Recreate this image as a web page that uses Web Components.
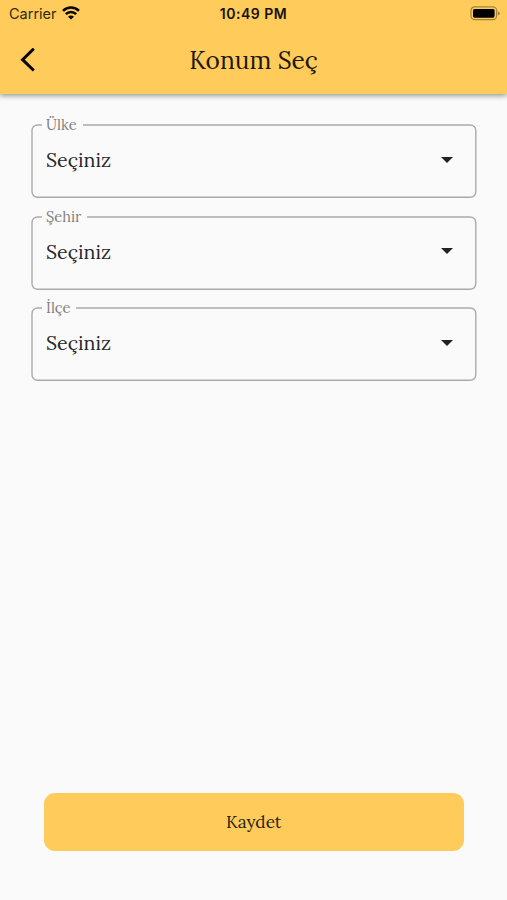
<!DOCTYPE html>
<html lang="tr">
<head>
<meta charset="utf-8">
<title>Konum Seç</title>
<style>
html,body{margin:0;height:100%;background:#fafafa}
body{overflow:hidden;font-family:Lora,"Liberation Serif",serif;color:#292929}
</style>
</head>
<body>
<location-page></location-page>
<script>
function define(name, html) {
  const t = document.createElement('template');
  t.innerHTML = html;
  customElements.define(name, class extends HTMLElement {
    constructor() {
      super();
      this.attachShadow({mode: 'open'}).append(t.content.cloneNode(true));
    }
  });
}

define('status-bar', `
<style>
:host{display:grid;grid-template-columns:1fr auto 1fr;align-items:center;height:27px;padding:0 7px 0 9px;font-family:Inter,sans-serif;color:#16120a;box-sizing:border-box}
.left{display:flex;align-items:center;gap:5px;font-size:14.5px;color:#33290f}
.time{font-weight:600;font-size:14px;letter-spacing:.5px;margin-left:-2px}
svg{display:block}
.left svg{margin-top:-1px}
.battery{justify-self:end}
</style>
<div class="left"><span>Carrier</span>
<svg width="18" height="14" viewBox="0 0 18 14" fill="none" stroke="#080600" stroke-width="2.6">
<path d="M1 4.8C5.5.3 12.5.3 17 4.8"/><path d="M3.8 8.1C6.8 5.2 11.2 5.2 14.2 8.1"/><path d="M6 10.7C7.7 9 10.3 9 12 10.7L9 13.6Z" fill="#080600" stroke="none"/></svg></div>
<span class="time">10:49 PM</span>
<svg class="battery" width="31" height="15" viewBox="0 0 31 15">
<rect x="2" y=".9" width="25.6" height="12.8" rx="3.6" fill="none" stroke="#a68439" stroke-width="1.2"/>
<rect x="4" y="2.9" width="21.6" height="8.8" rx="1.6" fill="#000"/>
<path d="M28.9 5.2Q30.9 6 30.9 7.3T28.9 9.4Z" fill="#a68439"/></svg>`);

define('app-bar', `
<style>
:host{display:block;height:94px;background:#ffcb5a;box-shadow:0 2px 5px rgba(0,0,0,.38);color:#1c170c}
.row{display:grid;grid-template-columns:56px 1fr 56px;align-items:center;height:66px}
svg{display:block;margin-left:20px}
h1{margin:0;font-weight:400;font-size:24.5px;line-height:34px;text-align:center}
</style>
<status-bar></status-bar>
<div class="row">
<svg width="16" height="24" viewBox="0 0 16 24" fill="none" stroke="#080600" stroke-width="3"><path d="M13.8 .7L2.6 11.7L13.8 22.5"/></svg>
<h1><slot></slot></h1></div>`);

define('select-field', `
<style>
:host{display:grid;grid-template-columns:100%;grid-template-rows:91.5px}
.outline,.label,.value{grid-area:1/1}
.outline{display:block;width:446px;height:75px}
.label{justify-self:start;align-self:start;margin:-8px 0 0 11px;padding:0 6px 0 4px;background:#fafafa;font-size:14.6px;line-height:18px;color:#808080}
.value{display:flex;align-items:center;justify-content:space-between;height:71.6px;padding:0 23px 0 15px;font-size:19.6px}
.arrow{display:block}
</style>
<svg class="outline" viewBox="0 0 446 75"><rect x="1" y="1" width="443.8" height="72.3" rx="5.5" fill="none" stroke="#aaa" stroke-width="1.4"/></svg>
<div class="label"><slot name="label"></slot></div>
<div class="value"><slot></slot><svg class="arrow" width="12" height="6" viewBox="0 0 12 6"><path d="M0 0H12L6 6Z" fill="#222"/></svg></div>`);

define('save-button', `
<style>
:host{display:block}
button{display:block;width:100%;height:58px;border:0;border-radius:11px;background:#ffcb5a;color:#292112;font:17.2px Lora,"Liberation Serif",serif;padding:0}
</style><button><slot></slot></button>`);

define('location-page', `
<style>
:host{display:flex;flex-direction:column;height:900px;background:#fafafa}
main{flex:1;display:flex;flex-direction:column;padding:30px 31px 49px}
save-button{margin:auto 12px 0 12.5px}
</style>
<app-bar>Konum Seç</app-bar>
<main>
<select-field><span slot="label">Ülke</span><span>Seçiniz</span></select-field>
<select-field><span slot="label">Şehir</span><span>Seçiniz</span></select-field>
<select-field><span slot="label">İlçe</span><span>Seçiniz</span></select-field>
<save-button>Kaydet</save-button>
</main>`);
</script>
</body>
</html>
